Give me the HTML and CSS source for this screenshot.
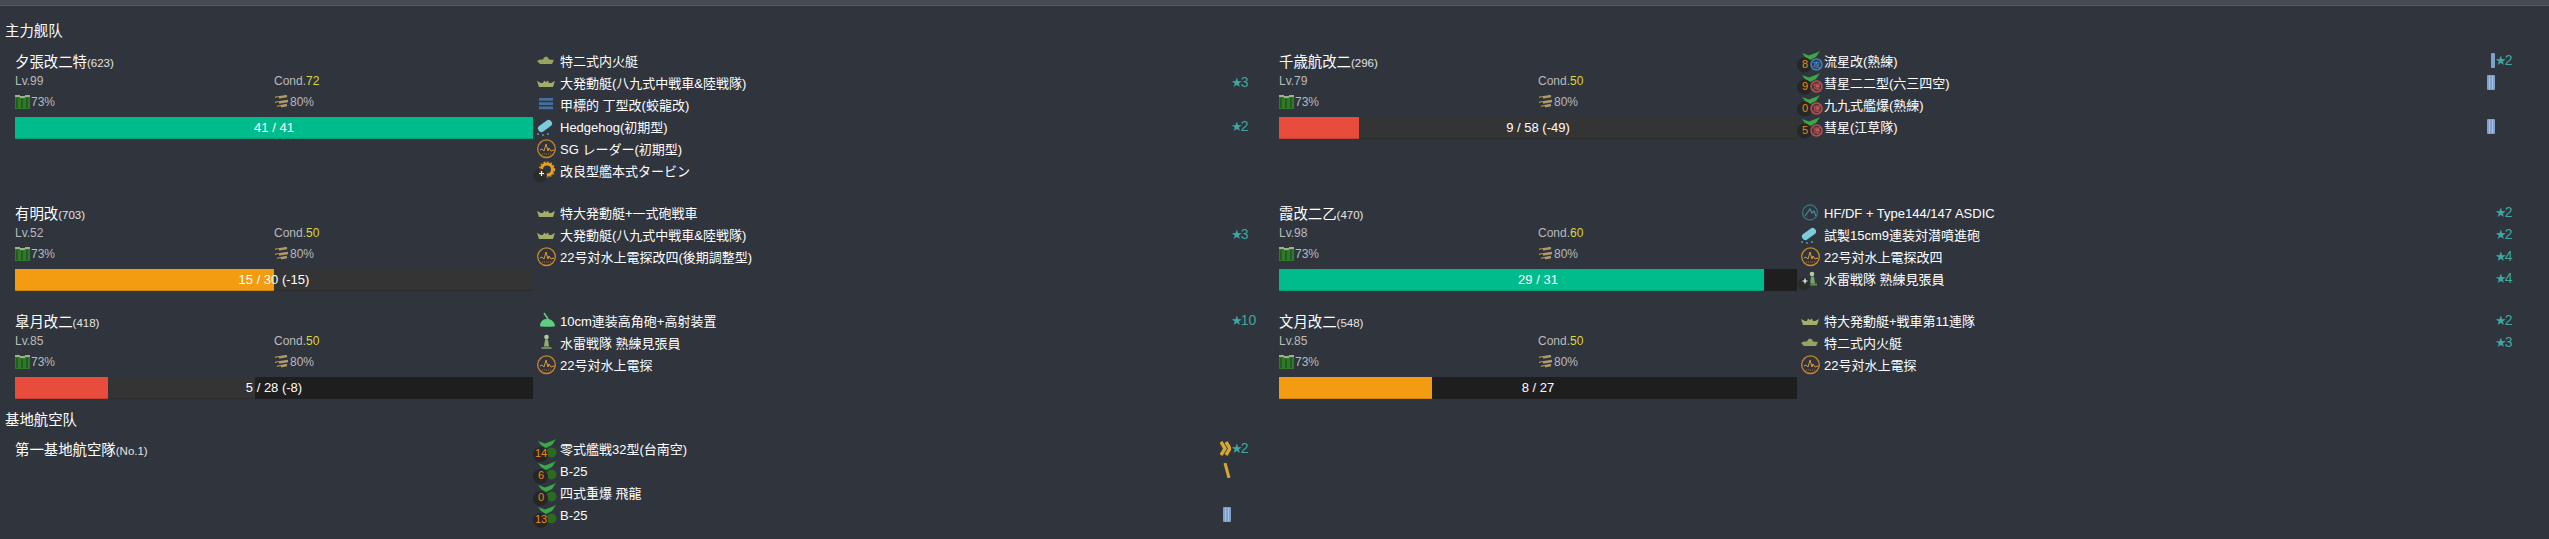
FILE: index.html
```html
<!DOCTYPE html>
<html>
<head>
    <title>Fleet</title>
    <link rel="stylesheet" href="styles.css">
</head>
<body>
    <svg class="icon-defs">
        <symbol id="i-ship" viewBox="0 0 27 22"><path d="M4 10l3-1.500h3l1-2 2-1 2 1 1 2 5 .5-2 4H7z" fill="#98a35f"/></symbol>
        <symbol id="i-boat" viewBox="0 0 27 22"><path d="M4 8l4 2h2l1-2.500 2 1.500 2-1.500 1 2.500h2l4-2-2 6H6z" fill="#a3ad68"/></symbol>
        <symbol id="i-torp" viewBox="0 0 27 22"><path d="M6 3h14v2.800H6zM6 7.200h14V10H6zM6 11.400h14v2.800H6z" fill="#44709a"/></symbol>
        <symbol id="i-asw" viewBox="0 0 27 22"><path d="M8.500 11.500l7-5" stroke="#7ccbdc" stroke-width="7" stroke-linecap="round"/><circle cx="10" cy="18" r="1" fill="#5a98a8"/><circle cx="5" cy="17" r="1" fill="#5a98a8"/><circle cx="15" cy="17" r="1" fill="#5a98a8"/></symbol>
        <symbol id="i-radar" viewBox="0 0 27 22"><circle cx="13.500" cy="9.700" r="8.800" fill="none" stroke="#c98a2c" stroke-width="1.300"/><path d="M7 11l2-1 2 2 2-7 2 7 1-3 2 3 3-1" fill="none" stroke="#d89a3c" stroke-width="1"/><path d="M9 15h9" stroke="#a87428" stroke-dasharray="1 1"/></symbol>
        <symbol id="i-sonar" viewBox="0 0 27 22"><circle cx="13" cy="9.500" r="7.500" fill="none" stroke="#35707f" stroke-width="1.400"/><path d="M8 13l5-7 2 4 2-2 2 5" fill="none" stroke="#4d8a9c" stroke-width="1.200"/></symbol>
        <symbol id="i-turbine" viewBox="0 0 27 22"><circle cx="14" cy="8.500" r="5.500" fill="none" stroke="#e8a020" stroke-width="3"/><circle cx="14" cy="8.500" r="7.500" fill="none" stroke="#e8a020" stroke-width="1.200" stroke-dasharray="2 1.500"/><circle cx="7" cy="14.500" r="7" fill="#2a2a2a" opacity=".9"/><path d="M8.500 10v5M6 12.500h5" stroke="#fff" stroke-width="1.200"/></symbol>
        <symbol id="i-gun" viewBox="0 0 27 22"><path d="M7 15c0-4 3-7 6-7h3c3 1 6 4 6 7 0 1-15 1-15 0z" fill="#5fcf7f"/><path d="M15 8l-4-6" stroke="#5fcf7f" stroke-width="1.600"/></symbol>
        <symbol id="i-look" viewBox="0 0 27 22"><circle cx="13.500" cy="4" r="2.300" fill="#b8c89a"/><path d="M12 6.500h3l1 7h-5z" fill="#8fae74"/><path d="M8.500 15h10" stroke="#6f8a58" stroke-width="2"/></symbol>
        <symbol id="i-look-plus" viewBox="0 0 27 22"><circle cx="15" cy="5" r="2.300" fill="#b8c89a"/><path d="M14 7.500h3l1 7h-5z" fill="#6fa868"/><path d="M12 15.500h8" stroke="#6f8a58" stroke-width="2"/><circle cx="7" cy="15" r="6.500" fill="#2a2a2a" opacity=".9"/><path d="M8 9.500v5M5.500 12h5" stroke="#fff" stroke-width="1.200"/></symbol>
        <symbol id="i-wing" viewBox="0 0 27 22"><path d="M5 2l7 2.500L20 1.500 23 0l-4 6-6 3-5-3z" fill="#39a845"/></symbol>
        <symbol id="i-fuel" viewBox="0 0 15 14"><path d="M0 1h5v13H0zM5 2h5v12H5zM10 1h5v13h-5z" fill="#2f7a2a"/><path d="M0 0h5v2H0zM5 1h5v2H5zM10 0h5v2h-5z" fill="#9fb08f"/><path d="M2 3v10M7 4v9M12 3v10" stroke="#173f15"/></symbol>
        <symbol id="i-ammo" viewBox="0 0 15 14"><path d="M1 3l12-2M1 8l13-2M3 12l10-2" stroke="#b09a6a" stroke-width="2.400"/><path d="M1 4l4-1M1 9l4-1M3 13l4-1" stroke="#3a3020" stroke-width="2"/></symbol>
        <symbol id="p-bar" viewBox="0 0 8 15"><rect x="0" width="8" height="15" rx="1" fill="#7f9fcc"/><path d="M2.500 1v13M5.500 1v13" stroke="#a9c2e0"/></symbol>
        <symbol id="p-thin" viewBox="0 0 8 15"><rect x="4" width="4" height="15" rx="1" fill="#7f9fcc"/></symbol>
        <symbol id="p-chev" viewBox="0 0 11 15"><path d="M1 1l4 6.500-4 6.500M6 1l4 6.500-4 6.500" fill="none" stroke="#d8a830" stroke-width="3.400"/></symbol>
        <symbol id="p-slash" viewBox="0 0 8 15"><path d="M2 0l4 15" stroke="#d8a830" stroke-width="3"/></symbol>
    </svg>

    <div class="topbar"></div>

    <h4 class="section-title">主力舰队</h4>
    <div class="ship-grid">

        <div class="ship">
            <div class="ship-info">
                <div class="ship-name">夕張改二特<small>(623)</small></div>
                <div class="stat-row lv-row"><span>Lv.99</span><span>Cond.<b>72</b></span></div>
                <div class="stat-row res-row">
                    <span><svg class="res-icon"><use href="#i-fuel"/></svg>73%</span>
                    <span><svg class="res-icon"><use href="#i-ammo"/></svg>80%</span>
                </div>
                <div class="hp-bar"><i class="seg seg-ok" style="width: 100%"></i><span class="hp-text">41 / 41</span></div>
            </div>
            <ul class="equips">
                <li><svg class="eq-icon"><use href="#i-ship"/></svg><span class="eq-name">特二式内火艇</span><span class="eq-star"></span></li>
                <li><svg class="eq-icon"><use href="#i-boat"/></svg><span class="eq-name">大発動艇(八九式中戦車&amp;陸戦隊)</span><span class="eq-star"><i>★</i>3</span></li>
                <li><svg class="eq-icon"><use href="#i-torp"/></svg><span class="eq-name">甲標的 丁型改(蛟龍改)</span><span class="eq-star"></span></li>
                <li><svg class="eq-icon"><use href="#i-asw"/></svg><span class="eq-name">Hedgehog(初期型)</span><span class="eq-star"><i>★</i>2</span></li>
                <li><svg class="eq-icon"><use href="#i-radar"/></svg><span class="eq-name">SG レーダー(初期型)</span><span class="eq-star"></span></li>
                <li><svg class="eq-icon"><use href="#i-turbine"/></svg><span class="eq-name">改良型艦本式タービン</span><span class="eq-star"></span></li>
            </ul>
        </div>

        <div class="ship">
            <div class="ship-info">
                <div class="ship-name">千歳航改二<small>(296)</small></div>
                <div class="stat-row lv-row"><span>Lv.79</span><span>Cond.<b>50</b></span></div>
                <div class="stat-row res-row">
                    <span><svg class="res-icon"><use href="#i-fuel"/></svg>73%</span>
                    <span><svg class="res-icon"><use href="#i-ammo"/></svg>80%</span>
                </div>
                <div class="hp-bar"><i class="seg seg-bad" style="width: 15.5%"></i><i class="seg seg-lost" style="width: 84.5%"></i><span class="hp-text">9 / 58 (-49)</span></div>
            </div>
            <ul class="equips">
                <li>
                    <svg class="eq-icon" viewBox="0 0 27 22"><use href="#i-wing" width="27" height="22"/><circle cx="7.500" cy="14" r="7.500" fill="#262626"/><circle cx="19.500" cy="13.500" r="5.500" fill="#2c3e55" stroke="#3f7fc0" stroke-width="1.500"/><text x="19.500" y="16" class="badge-text badge-blue">攻</text><text x="8" y="16.500" class="slot-num">8</text></svg>
                    <span class="eq-name">流星改(熟練)</span><svg class="prof prof-bar"><use href="#p-thin"/></svg><span class="eq-star"><i>★</i>2</span>
                </li>
                <li>
                    <svg class="eq-icon" viewBox="0 0 27 22"><use href="#i-wing" width="27" height="22"/><circle cx="7.500" cy="14" r="7.500" fill="#262626"/><circle cx="19.500" cy="13.500" r="5.500" fill="#4a3036" stroke="#b85050" stroke-width="1.500"/><text x="19.500" y="16" class="badge-text badge-red">爆</text><text x="8" y="16.500" class="slot-num">9</text></svg>
                    <span class="eq-name">彗星二二型(六三四空)</span><svg class="prof prof-bar"><use href="#p-bar"/></svg><span class="eq-star"></span>
                </li>
                <li>
                    <svg class="eq-icon" viewBox="0 0 27 22"><use href="#i-wing" width="27" height="22"/><circle cx="7.500" cy="14" r="7.500" fill="#262626"/><circle cx="19.500" cy="13.500" r="5.500" fill="#4a3036" stroke="#b85050" stroke-width="1.500"/><text x="19.500" y="16" class="badge-text badge-red">爆</text><text x="8" y="16.500" class="slot-num">0</text></svg>
                    <span class="eq-name">九九式艦爆(熟練)</span><span class="eq-star"></span>
                </li>
                <li>
                    <svg class="eq-icon" viewBox="0 0 27 22"><use href="#i-wing" width="27" height="22"/><circle cx="7.500" cy="14" r="7.500" fill="#262626"/><circle cx="19.500" cy="13.500" r="5.500" fill="#4a3036" stroke="#b85050" stroke-width="1.500"/><text x="19.500" y="16" class="badge-text badge-red">爆</text><text x="8" y="16.500" class="slot-num">5</text></svg>
                    <span class="eq-name">彗星(江草隊)</span><svg class="prof prof-bar"><use href="#p-bar"/></svg><span class="eq-star"></span>
                </li>
            </ul>
        </div>

        <div class="ship">
            <div class="ship-info">
                <div class="ship-name">有明改<small>(703)</small></div>
                <div class="stat-row lv-row"><span>Lv.52</span><span>Cond.<b>50</b></span></div>
                <div class="stat-row res-row">
                    <span><svg class="res-icon"><use href="#i-fuel"/></svg>73%</span>
                    <span><svg class="res-icon"><use href="#i-ammo"/></svg>80%</span>
                </div>
                <div class="hp-bar"><i class="seg seg-warn" style="width: 50%"></i><i class="seg seg-lost" style="width: 50%"></i><span class="hp-text">15 / 30 (-15)</span></div>
            </div>
            <ul class="equips">
                <li><svg class="eq-icon"><use href="#i-boat"/></svg><span class="eq-name">特大発動艇+一式砲戦車</span><span class="eq-star"></span></li>
                <li><svg class="eq-icon"><use href="#i-boat"/></svg><span class="eq-name">大発動艇(八九式中戦車&amp;陸戦隊)</span><span class="eq-star"><i>★</i>3</span></li>
                <li><svg class="eq-icon"><use href="#i-radar"/></svg><span class="eq-name">22号対水上電探改四(後期調整型)</span><span class="eq-star"></span></li>
            </ul>
        </div>

        <div class="ship">
            <div class="ship-info">
                <div class="ship-name">霞改二乙<small>(470)</small></div>
                <div class="stat-row lv-row"><span>Lv.98</span><span>Cond.<b>60</b></span></div>
                <div class="stat-row res-row">
                    <span><svg class="res-icon"><use href="#i-fuel"/></svg>73%</span>
                    <span><svg class="res-icon"><use href="#i-ammo"/></svg>80%</span>
                </div>
                <div class="hp-bar"><i class="seg seg-ok" style="width: 93.55%"></i><span class="hp-text">29 / 31</span></div>
            </div>
            <ul class="equips">
                <li><svg class="eq-icon"><use href="#i-sonar"/></svg><span class="eq-name">HF/DF + Type144/147 ASDIC</span><span class="eq-star"><i>★</i>2</span></li>
                <li><svg class="eq-icon"><use href="#i-asw"/></svg><span class="eq-name">試製15cm9連装対潜噴進砲</span><span class="eq-star"><i>★</i>2</span></li>
                <li><svg class="eq-icon"><use href="#i-radar"/></svg><span class="eq-name">22号対水上電探改四</span><span class="eq-star"><i>★</i>4</span></li>
                <li><svg class="eq-icon"><use href="#i-look-plus"/></svg><span class="eq-name">水雷戦隊 熟練見張員</span><span class="eq-star"><i>★</i>4</span></li>
            </ul>
        </div>

        <div class="ship">
            <div class="ship-info">
                <div class="ship-name">皐月改二<small>(418)</small></div>
                <div class="stat-row lv-row"><span>Lv.85</span><span>Cond.<b>50</b></span></div>
                <div class="stat-row res-row">
                    <span><svg class="res-icon"><use href="#i-fuel"/></svg>73%</span>
                    <span><svg class="res-icon"><use href="#i-ammo"/></svg>80%</span>
                </div>
                <div class="hp-bar"><i class="seg seg-bad" style="width: 17.86%"></i><i class="seg seg-lost" style="width: 28.57%"></i><span class="hp-text">5 / 28 (-8)</span></div>
            </div>
            <ul class="equips">
                <li><svg class="eq-icon"><use href="#i-gun"/></svg><span class="eq-name">10cm連装高角砲+高射装置</span><span class="eq-star"><i>★</i>10</span></li>
                <li><svg class="eq-icon"><use href="#i-look"/></svg><span class="eq-name">水雷戦隊 熟練見張員</span><span class="eq-star"></span></li>
                <li><svg class="eq-icon"><use href="#i-radar"/></svg><span class="eq-name">22号対水上電探</span><span class="eq-star"></span></li>
            </ul>
        </div>

        <div class="ship">
            <div class="ship-info">
                <div class="ship-name">文月改二<small>(548)</small></div>
                <div class="stat-row lv-row"><span>Lv.85</span><span>Cond.<b>50</b></span></div>
                <div class="stat-row res-row">
                    <span><svg class="res-icon"><use href="#i-fuel"/></svg>73%</span>
                    <span><svg class="res-icon"><use href="#i-ammo"/></svg>80%</span>
                </div>
                <div class="hp-bar"><i class="seg seg-warn" style="width: 29.63%"></i><span class="hp-text">8 / 27</span></div>
            </div>
            <ul class="equips">
                <li><svg class="eq-icon"><use href="#i-boat"/></svg><span class="eq-name">特大発動艇+戦車第11連隊</span><span class="eq-star"><i>★</i>2</span></li>
                <li><svg class="eq-icon"><use href="#i-ship"/></svg><span class="eq-name">特二式内火艇</span><span class="eq-star"><i>★</i>3</span></li>
                <li><svg class="eq-icon"><use href="#i-radar"/></svg><span class="eq-name">22号対水上電探</span><span class="eq-star"></span></li>
            </ul>
        </div>
    </div>

    <h4 class="section-title">基地航空队</h4>
    <div class="ship-grid">
        <div class="ship">
            <div class="ship-info">
                <div class="ship-name">第一基地航空隊<small>(No.1)</small></div>
            </div>
            <ul class="equips">
                <li>
                    <svg class="eq-icon" viewBox="0 0 27 22"><use href="#i-wing" width="27" height="22"/><circle cx="18.500" cy="13.500" r="5" fill="#2c6a20"/><circle cx="7.500" cy="15.500" r="7.500" fill="#262626"/><text x="8" y="18" class="slot-num">14</text></svg>
                    <span class="eq-name">零式艦戦32型(台南空)</span><svg class="prof prof-chev"><use href="#p-chev"/></svg><span class="eq-star"><i>★</i>2</span>
                </li>
                <li>
                    <svg class="eq-icon" viewBox="0 0 27 22"><use href="#i-wing" width="27" height="22"/><circle cx="18.500" cy="13.500" r="5" fill="#2c6a20"/><circle cx="7.500" cy="15.500" r="7.500" fill="#262626"/><text x="8" y="18" class="slot-num">6</text></svg>
                    <span class="eq-name">B-25</span><svg class="prof prof-bar"><use href="#p-slash"/></svg><span class="eq-star"></span>
                </li>
                <li>
                    <svg class="eq-icon" viewBox="0 0 27 22"><use href="#i-wing" width="27" height="22"/><circle cx="18.500" cy="13.500" r="5" fill="#2c6a20"/><circle cx="7.500" cy="15.500" r="7.500" fill="#262626"/><text x="8" y="18" class="slot-num">0</text></svg>
                    <span class="eq-name">四式重爆 飛龍</span><span class="eq-star"></span>
                </li>
                <li>
                    <svg class="eq-icon" viewBox="0 0 27 22"><use href="#i-wing" width="27" height="22"/><circle cx="18.500" cy="13.500" r="5" fill="#2c6a20"/><circle cx="7.500" cy="15.500" r="7.500" fill="#262626"/><text x="8" y="18" class="slot-num">13</text></svg>
                    <span class="eq-name">B-25</span><svg class="prof prof-bar"><use href="#p-bar"/></svg><span class="eq-star"></span>
                </li>
            </ul>
        </div>
    </div>
</body>
</html>
```

FILE: styles.css
```css
body {
    margin: 0;
    height: 539px;
    overflow: hidden;
    background-color: #2f343d;
    color: #fff;
    font-family: "Liberation Sans", "Noto Sans CJK SC", sans-serif;
    font-size: 13px;
}

.icon-defs {
    display: none;
}

.topbar {
    height: 5px;
    background-color: #444952;
    border-bottom: 1px solid #555a63;
}

.section-title {
    margin: 0;
    padding: 15px 0 0 5px;
    height: 22px;
    line-height: 22px;
    font-size: 14.4px;
    font-weight: normal;
}

.topbar + .section-title {
    line-height: 20px;
}

.ship-grid + .section-title {
    padding-top: 10px;
}

.ship-grid {
    display: grid;
    grid-template-columns: 1264px 1264px;
    padding: 8px 0 0 15px;
}

.ship {
    display: flex;
    align-items: flex-start;
    padding-bottom: 20px;
}

.ship:nth-last-child(-n+2) {
    padding-bottom: 0;
}

.ship-info {
    flex: none;
    width: 518px;
}

.ship-name {
    height: 20px;
    line-height: 22px;
    font-size: 14.4px;
}

.ship-name small {
    font-size: 11.5px;
    color: #e4e4e4;
}

.stat-row {
    display: grid;
    grid-template-columns: 259px 259px;
    color: #bbb;
    font-size: 12px;
}

.stat-row b {
    font-weight: normal;
    color: #d9d93c;
}

.lv-row {
    height: 20px;
    line-height: 20px;
}

.res-row {
    height: 22px;
    line-height: 22px;
    margin-bottom: 4px;
}

.res-row span {
    display: flex;
    align-items: center;
}

.res-icon {
    width: 15px;
    height: 14px;
    margin-right: 1px;
}

.hp-bar {
    position: relative;
    display: flex;
    height: 22px;
    background-color: #1e1e1e;
}

.seg {
    display: block;
    height: 22px;
    box-shadow: inset 0 -1px 0 rgba(0, 0, 0, 0.15);
}

.seg-ok {
    background-color: #00bc8c;
}

.seg-warn {
    background-color: #f39c12;
}

.seg-bad {
    background-color: #e74c3c;
}

.seg-lost {
    background-color: #343434;
}

.hp-text {
    position: absolute;
    left: 0;
    right: 0;
    top: 0;
    text-align: center;
    line-height: 21px;
    font-size: 13px;
}

.equips {
    flex: none;
    width: 746px;
    margin: 0;
    padding: 0;
    list-style: none;
}

.equips li {
    display: flex;
    align-items: center;
    height: 22px;
    line-height: 22px;
}

.eq-icon {
    flex: none;
    width: 27px;
    height: 22px;
    overflow: visible;
}

.eq-name {
    flex: 1;
    white-space: nowrap;
}

.eq-star {
    flex: none;
    width: 48px;
    margin-top: -3px;
    color: #3fa8a0;
    font-size: 14px;
}

.eq-star i {
    font-family: "DejaVu Sans", sans-serif;
    font-style: normal;
    font-size: 13px;
    margin-right: -2px;
}

.prof {
    flex: none;
    margin-top: -3px;
    height: 15px;
}

.prof-bar {
    width: 8px;
}

.prof-chev {
    width: 11px;
}

.slot-num {
    font-size: 11px;
    fill: #e8891c;
    text-anchor: middle;
}

.badge-text {
    font-size: 7px;
    text-anchor: middle;
}

.badge-blue {
    fill: #5a9ad8;
}

.badge-red {
    fill: #d86060;
}
```
